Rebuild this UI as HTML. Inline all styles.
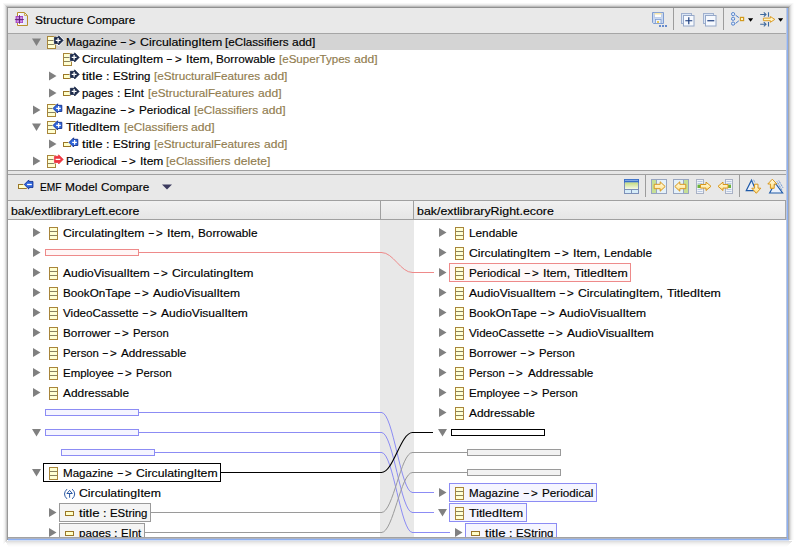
<!DOCTYPE html>
<html><head><meta charset="utf-8"><title>EMF Model Compare</title>
<style>
html,body{margin:0;padding:0;background:#fff;}
body{width:796px;height:548px;position:relative;overflow:hidden;font-family:"Liberation Sans",sans-serif;font-size:11px;color:#000;}
#g{position:absolute;left:0;top:0;}
.t{position:absolute;white-space:pre;line-height:14px;height:14px;transform-origin:0 50%;-webkit-text-stroke:.15px currentColor;}
#win{position:absolute;left:8px;top:8px;width:778px;height:529px;background:#fff;overflow:hidden;}
#in{position:absolute;left:-8px;top:-8px;width:796px;height:548px;}
.e{position:absolute;}
</style></head><body>
<div class="e" style="left:7px;top:7px;width:1px;height:533px;background:#989898"></div>
<div class="e" style="left:6px;top:7px;width:1px;height:534px;background:#c8c8c8"></div>
<div class="e" style="left:5px;top:6px;width:1px;height:536px;background:#e2e2e2"></div>
<div class="e" style="left:4px;top:5px;width:1px;height:538px;background:#f3f3f3"></div>
<div class="e" style="left:3px;top:4px;width:1px;height:540px;background:#fafafa"></div>
<div class="e" style="left:7px;top:7px;width:782px;height:1px;background:#909090"></div>
<div class="e" style="left:6px;top:6px;width:784px;height:1px;background:#bcbcbc"></div>
<div class="e" style="left:5px;top:5px;width:786px;height:1px;background:#dadada"></div>
<div class="e" style="left:4px;top:4px;width:788px;height:1px;background:#ededed"></div>
<div class="e" style="left:3px;top:3px;width:790px;height:1px;background:#f7f7f7"></div>
<div class="e" style="left:786px;top:8px;width:1px;height:531px;background:#bcc8e2"></div>
<div class="e" style="left:787px;top:8px;width:1px;height:533px;background:#8cb0f2"></div>
<div class="e" style="left:788px;top:8px;width:1px;height:532px;background:#a6a8ae"></div>
<div class="e" style="left:789px;top:7px;width:1px;height:533px;background:#c6c6c6"></div>
<div class="e" style="left:790px;top:6px;width:1px;height:534px;background:#dedede"></div>
<div class="e" style="left:791px;top:5px;width:1px;height:535px;background:#eeeeee"></div>
<div class="e" style="left:792px;top:4px;width:1px;height:536px;background:#f7f7f7"></div>
<div class="e" style="left:793px;top:3px;width:1px;height:537px;background:#fcfcfc"></div>
<div class="e" style="left:8px;top:537px;width:779px;height:1px;background:#a2a2a2"></div>
<div class="e" style="left:8px;top:538px;width:779px;height:1px;background:#aeb3c2"></div>
<div class="e" style="left:8px;top:539px;width:781px;height:1px;background:#8cb0f2"></div>
<div class="e" style="left:8px;top:540px;width:781px;height:1px;background:#d3def3"></div>
<div class="e" style="left:6px;top:541px;width:786px;height:1px;background:#e0e0e0"></div>
<div class="e" style="left:6px;top:542px;width:785px;height:1px;background:#e9e9e9"></div>
<div class="e" style="left:7px;top:543px;width:783px;height:1px;background:#f0f0f0"></div>
<div class="e" style="left:7px;top:544px;width:782px;height:1px;background:#f6f6f6"></div>
<div class="e" style="left:8px;top:545px;width:780px;height:1px;background:#fafafa"></div>
<div class="e" style="left:8px;top:546px;width:779px;height:1px;background:#fdfdfd"></div>
<div id="win"><div id="in">
<svg id="g" width="796" height="548" viewBox="0 0 796 548">
<defs><linearGradient id="lg" x1="0" y1="0" x2="0" y2="1"><stop offset="0" stop-color="#f1f1f1"/><stop offset="1" stop-color="#e6e6e6"/></linearGradient></defs>
<g shape-rendering="crispEdges">
<rect x="8" y="8" width="778" height="25" fill="#e9e9e9"/>
<rect x="8" y="33" width="778" height="1" fill="#a6a6a6"/>
<rect x="8" y="34" width="778" height="16" fill="#d4d4d4"/>
<rect x="8" y="170" width="778" height="1" fill="#a0a0a0"/>
<rect x="8" y="171" width="778" height="3" fill="#e6e6e6"/>
<rect x="8" y="174" width="778" height="1" fill="#a0a0a0"/>
<rect x="8" y="175" width="778" height="25" fill="#e8e8e8"/>
<rect x="8" y="200" width="778" height="1" fill="#a0a0a0"/>
<rect x="8" y="201" width="778" height="18" fill="url(#lg)"/>
<rect x="8" y="219" width="778" height="1" fill="#a0a0a0"/>
<rect x="380" y="220" width="34" height="317" fill="#e8e8e8"/>
<rect x="380" y="201" width="1" height="18" fill="#a0a0a0"/>
<rect x="413" y="201" width="1" height="18" fill="#a0a0a0"/><rect x="785" y="201" width="1" height="18" fill="#a0a0a0"/>
</g>
<path d="M32 38.5h9l-4.5 7.5z" fill="#808080"/>
<g transform="translate(47,36)"><rect x=".5" y=".5" width="8" height="12" fill="#ffffd2" stroke="#a8853a"/><path d="M1 4.5H8M1 8.5H8" stroke="#8a8260" fill="none"/></g>
<path d="M54.4 37.3H58.6V35.8L63.2 40.4L58.6 45.0V43.5H54.4z" fill="#fff" stroke="#fff" stroke-width="1.8" stroke-linejoin="round"/><path d="M54.4 37.3H58.6V35.8L63.2 40.4L58.6 45.0V43.5H54.4z" fill="#1c2a4a" stroke="#1c2a4a" stroke-width=".8"/><path d="M55.7 40.4H60.5M58.1 38.0V42.8" stroke="#fff" stroke-width="1.25" fill="none"/>
<g transform="translate(63,53)"><rect x=".5" y=".5" width="8" height="12" fill="#ffffd2" stroke="#a8853a"/><path d="M1 4.5H8M1 8.5H8" stroke="#8a8260" fill="none"/></g>
<path d="M70.4 54.3H74.6V52.8L79.2 57.4L74.6 62.0V60.5H70.4z" fill="#fff" stroke="#fff" stroke-width="1.8" stroke-linejoin="round"/><path d="M70.4 54.3H74.6V52.8L79.2 57.4L74.6 62.0V60.5H70.4z" fill="#1c2a4a" stroke="#1c2a4a" stroke-width=".8"/><path d="M71.7 57.4H76.5M74.1 55.0V59.8" stroke="#fff" stroke-width="1.25" fill="none"/>
<path d="M49 71.5l7.5 4.5l-7.5 4.5z" fill="#808080"/>
<rect x="63.5" y="74.5" width="7" height="4" fill="#ffffc8" stroke="#9a7628"/>
<path d="M70.4 71.30000000000001H74.6V69.80000000000001L79.2 74.4L74.6 79.0V77.5H70.4z" fill="#fff" stroke="#fff" stroke-width="1.8" stroke-linejoin="round"/><path d="M70.4 71.30000000000001H74.6V69.80000000000001L79.2 74.4L74.6 79.0V77.5H70.4z" fill="#1c2a4a" stroke="#1c2a4a" stroke-width=".8"/><path d="M71.7 74.4H76.5M74.1 72.0V76.80000000000001" stroke="#fff" stroke-width="1.25" fill="none"/>
<path d="M49 88.5l7.5 4.5l-7.5 4.5z" fill="#808080"/>
<rect x="63.5" y="91.5" width="7" height="4" fill="#ffffc8" stroke="#9a7628"/>
<path d="M70.4 88.30000000000001H74.6V86.80000000000001L79.2 91.4L74.6 96.0V94.5H70.4z" fill="#fff" stroke="#fff" stroke-width="1.8" stroke-linejoin="round"/><path d="M70.4 88.30000000000001H74.6V86.80000000000001L79.2 91.4L74.6 96.0V94.5H70.4z" fill="#1c2a4a" stroke="#1c2a4a" stroke-width=".8"/><path d="M71.7 91.4H76.5M74.1 89.0V93.80000000000001" stroke="#fff" stroke-width="1.25" fill="none"/>
<path d="M33 105.5l7.5 4.5l-7.5 4.5z" fill="#808080"/>
<g transform="translate(47,104)"><rect x=".5" y=".5" width="8" height="12" fill="#ffffd2" stroke="#a8853a"/><path d="M1 4.5H8M1 8.5H8" stroke="#8a8260" fill="none"/></g>
<path d="M61.8 105.30000000000001H57.6V103.80000000000001L53 108.4L57.6 113.0V111.5H61.8z" fill="#fff" stroke="#fff" stroke-width="1.8" stroke-linejoin="round"/><path d="M61.8 105.30000000000001H57.6V103.80000000000001L53 108.4L57.6 113.0V111.5H61.8z" fill="#2f66dd" stroke="#12308a" stroke-width=".9"/><path d="M56.2 108.4H60.8M58.6 106.0V110.80000000000001" stroke="#fff" stroke-width="1.25" fill="none"/>
<path d="M32 123.5h9l-4.5 7.5z" fill="#808080"/>
<g transform="translate(47,121)"><rect x=".5" y=".5" width="8" height="12" fill="#ffffd2" stroke="#a8853a"/><path d="M1 4.5H8M1 8.5H8" stroke="#8a8260" fill="none"/></g>
<path d="M61.8 122.30000000000001H57.6V120.80000000000001L53 125.4L57.6 130.0V128.5H61.8z" fill="#fff" stroke="#fff" stroke-width="1.8" stroke-linejoin="round"/><path d="M61.8 122.30000000000001H57.6V120.80000000000001L53 125.4L57.6 130.0V128.5H61.8z" fill="#2f66dd" stroke="#12308a" stroke-width=".9"/><path d="M56.2 125.4H60.8M58.6 123.0V127.80000000000001" stroke="#fff" stroke-width="1.25" fill="none"/>
<path d="M49 139.5l7.5 4.5l-7.5 4.5z" fill="#808080"/>
<rect x="63.5" y="142.5" width="7" height="4" fill="#ffffc8" stroke="#9a7628"/>
<path d="M77.8 139.3H73.6V137.8L69 142.4L73.6 147.0V145.5H77.8z" fill="#fff" stroke="#fff" stroke-width="1.8" stroke-linejoin="round"/><path d="M77.8 139.3H73.6V137.8L69 142.4L73.6 147.0V145.5H77.8z" fill="#2f66dd" stroke="#12308a" stroke-width=".9"/><path d="M72.2 142.4H76.8M74.6 140.0V144.8" stroke="#fff" stroke-width="1.25" fill="none"/>
<path d="M33 156.5l7.5 4.5l-7.5 4.5z" fill="#808080"/>
<g transform="translate(47,155)"><rect x=".5" y=".5" width="8" height="12" fill="#ffffd2" stroke="#a8853a"/><path d="M1 4.5H8M1 8.5H8" stroke="#8a8260" fill="none"/></g>
<path d="M54.4 156.3H58.6V154.8L63.2 159.4L58.6 164.0V162.5H54.4z" fill="#fff" stroke="#fff" stroke-width="1.8" stroke-linejoin="round"/><path d="M54.4 156.3H58.6V154.8L63.2 159.4L58.6 164.0V162.5H54.4z" fill="#ee3540" stroke="#ee3540" stroke-width=".8"/><path d="M55.6 159.4H60.3" stroke="#fff" stroke-width="1.3" fill="none"/>
<rect x="18.5" y="184.5" width="8" height="4" fill="#ffffc8" stroke="#9a7628"/>
<path d="M33.0 181.4H28.799999999999997V179.9L24.2 184.5L28.799999999999997 189.1V187.6H33.0z" fill="#fff" stroke="#fff" stroke-width="1.8" stroke-linejoin="round"/><path d="M33.0 181.4H28.799999999999997V179.9L24.2 184.5L28.799999999999997 189.1V187.6H33.0z" fill="#2f66dd" stroke="#12308a" stroke-width=".9"/><path d="M27.099999999999998 184.5H31.799999999999997" stroke="#fff" stroke-width="1.3" fill="none"/>
<path d="M162 184.5h10l-5 5z" fill="#3b3a5e"/>
<path d="M33 228.0l7.5 4.5l-7.5 4.5z" fill="#808080"/>
<g transform="translate(49,227.0)"><rect x=".5" y=".5" width="8" height="12" fill="#ffffd2" stroke="#a8853a"/><path d="M1 4.5H8M1 8.5H8" stroke="#8a8260" fill="none"/></g>
<path d="M33 268.0l7.5 4.5l-7.5 4.5z" fill="#808080"/>
<g transform="translate(49,267.0)"><rect x=".5" y=".5" width="8" height="12" fill="#ffffd2" stroke="#a8853a"/><path d="M1 4.5H8M1 8.5H8" stroke="#8a8260" fill="none"/></g>
<path d="M33 288.0l7.5 4.5l-7.5 4.5z" fill="#808080"/>
<g transform="translate(49,287.0)"><rect x=".5" y=".5" width="8" height="12" fill="#ffffd2" stroke="#a8853a"/><path d="M1 4.5H8M1 8.5H8" stroke="#8a8260" fill="none"/></g>
<path d="M33 308.0l7.5 4.5l-7.5 4.5z" fill="#808080"/>
<g transform="translate(49,307.0)"><rect x=".5" y=".5" width="8" height="12" fill="#ffffd2" stroke="#a8853a"/><path d="M1 4.5H8M1 8.5H8" stroke="#8a8260" fill="none"/></g>
<path d="M33 328.0l7.5 4.5l-7.5 4.5z" fill="#808080"/>
<g transform="translate(49,327.0)"><rect x=".5" y=".5" width="8" height="12" fill="#ffffd2" stroke="#a8853a"/><path d="M1 4.5H8M1 8.5H8" stroke="#8a8260" fill="none"/></g>
<path d="M33 348.0l7.5 4.5l-7.5 4.5z" fill="#808080"/>
<g transform="translate(49,347.0)"><rect x=".5" y=".5" width="8" height="12" fill="#ffffd2" stroke="#a8853a"/><path d="M1 4.5H8M1 8.5H8" stroke="#8a8260" fill="none"/></g>
<path d="M33 368.0l7.5 4.5l-7.5 4.5z" fill="#808080"/>
<g transform="translate(49,367.0)"><rect x=".5" y=".5" width="8" height="12" fill="#ffffd2" stroke="#a8853a"/><path d="M1 4.5H8M1 8.5H8" stroke="#8a8260" fill="none"/></g>
<path d="M33 388.0l7.5 4.5l-7.5 4.5z" fill="#808080"/>
<g transform="translate(49,387.0)"><rect x=".5" y=".5" width="8" height="12" fill="#ffffd2" stroke="#a8853a"/><path d="M1 4.5H8M1 8.5H8" stroke="#8a8260" fill="none"/></g>
<path d="M33 248.0l7.5 4.5l-7.5 4.5z" fill="#808080"/>
<g shape-rendering="crispEdges">
<rect x="45.5" y="249.5" width="93" height="6" fill="#fff6f6" stroke="#ee8a8a" stroke-width="1"/>
<path d="M139 252.5H382" stroke="#ee8a8a" stroke-width="1" fill="none"/>
<rect x="45.5" y="409.5" width="93" height="6" fill="#f5f5ff" stroke="#8c8cf4" stroke-width="1"/>
<path d="M139 412.5H382" stroke="#8c8cf4" stroke-width="1" fill="none"/>
<rect x="45.5" y="429.5" width="93" height="6" fill="#f5f5ff" stroke="#8c8cf4" stroke-width="1"/>
<path d="M139 432.5H382" stroke="#8c8cf4" stroke-width="1" fill="none"/>
<rect x="61.5" y="449.5" width="93" height="6" fill="#f5f5ff" stroke="#8c8cf4" stroke-width="1"/>
<path d="M155 452.5H382" stroke="#8c8cf4" stroke-width="1" fill="none"/>
<rect x="43.5" y="463.5" width="177" height="18" fill="#fff" stroke="#000" stroke-width="1"/>
<path d="M221 472.5H382" stroke="#000" stroke-width="1" fill="none"/>
<rect x="59.5" y="503.5" width="91" height="18" fill="#f4f4f4" stroke="#9a9a9a" stroke-width="1"/>
<path d="M151 512.5H382" stroke="#9a9a9a" stroke-width="1" fill="none"/>
<rect x="59.5" y="523.5" width="85" height="18" fill="#f4f4f4" stroke="#9a9a9a" stroke-width="1"/>
<path d="M145 532.5H382" stroke="#9a9a9a" stroke-width="1" fill="none"/>
</g>
<path d="M32 429.0h9l-4.5 7.5z" fill="#808080"/>
<path d="M32 469.0h9l-4.5 7.5z" fill="#808080"/>
<g transform="translate(49,467.0)"><rect x=".5" y=".5" width="8" height="12" fill="#ffffd2" stroke="#a8853a"/><path d="M1 4.5H8M1 8.5H8" stroke="#8a8260" fill="none"/></g>
<path d="M49 508.0l7.5 4.5l-7.5 4.5z" fill="#808080"/>
<rect x="65.5" y="511.5" width="8" height="4" fill="#ffffc8" stroke="#9a7628"/>
<path d="M49 528.0l7.5 4.5l-7.5 4.5z" fill="#808080"/>
<rect x="65.5" y="531.5" width="8" height="4" fill="#ffffc8" stroke="#9a7628"/>
<g transform="translate(63.5,488.5)" fill="none" stroke="#1f4f9e" stroke-width=".95"><path d="M3.5 .6Q-1.5 5.5 3.5 10.4M8.7 .6Q13.7 5.5 8.7 10.4"/><path d="M6.1 1.9L3.4 5H8.8zM6.1 5V9.2"/></g>
<path d="M381.5 252.5C393.28 252.5 400.72 272.5 412.5 272.5" stroke="#ee8a8a" stroke-width="1" fill="none"/>
<path d="M381.5 412.5C393.28 412.5 400.72 492.5 412.5 492.5" stroke="#8c8cf4" stroke-width="1" fill="none"/>
<path d="M381.5 432.5C393.28 432.5 400.72 512.5 412.5 512.5" stroke="#8c8cf4" stroke-width="1" fill="none"/>
<path d="M381.5 452.5C393.28 452.5 400.72 532.5 412.5 532.5" stroke="#8c8cf4" stroke-width="1" fill="none"/>
<path d="M381.5 512.5C393.28 512.5 400.72 452.5 412.5 452.5" stroke="#9a9a9a" stroke-width="1" fill="none"/>
<path d="M381.5 532.5C393.28 532.5 400.72 472.5 412.5 472.5" stroke="#9a9a9a" stroke-width="1" fill="none"/>
<path d="M381.5 472.5C393.28 472.5 400.72 432.5 412.5 432.5" stroke="#000" stroke-width="1.15" fill="none"/>
<path d="M439 228.0l7.5 4.5l-7.5 4.5z" fill="#808080"/>
<path d="M439 248.0l7.5 4.5l-7.5 4.5z" fill="#808080"/>
<path d="M439 268.0l7.5 4.5l-7.5 4.5z" fill="#808080"/>
<path d="M439 288.0l7.5 4.5l-7.5 4.5z" fill="#808080"/>
<path d="M439 308.0l7.5 4.5l-7.5 4.5z" fill="#808080"/>
<path d="M439 328.0l7.5 4.5l-7.5 4.5z" fill="#808080"/>
<path d="M439 348.0l7.5 4.5l-7.5 4.5z" fill="#808080"/>
<path d="M439 368.0l7.5 4.5l-7.5 4.5z" fill="#808080"/>
<path d="M439 388.0l7.5 4.5l-7.5 4.5z" fill="#808080"/>
<path d="M439 408.0l7.5 4.5l-7.5 4.5z" fill="#808080"/>
<g shape-rendering="crispEdges">
<rect x="449.5" y="263.5" width="181" height="18" fill="#fff8f8" stroke="#ee8a8a" stroke-width="1"/>
<path d="M412 272.5H434" stroke="#ee8a8a" stroke-width="1" fill="none"/>
<rect x="451.5" y="429.5" width="93" height="6" fill="#fff" stroke="#000" stroke-width="1"/>
<path d="M412 432.5H433" stroke="#000" stroke-width="1" fill="none"/>
<rect x="467.5" y="449.5" width="93" height="6" fill="#f2f2f2" stroke="#9a9a9a" stroke-width="1"/>
<path d="M412 452.5H467" stroke="#9a9a9a" stroke-width="1" fill="none"/>
<rect x="467.5" y="469.5" width="93" height="6" fill="#f2f2f2" stroke="#9a9a9a" stroke-width="1"/>
<path d="M412 472.5H467" stroke="#9a9a9a" stroke-width="1" fill="none"/>
<rect x="449.5" y="483.5" width="147" height="18" fill="#f5f5ff" stroke="#8c8cf4" stroke-width="1"/>
<path d="M412 492.5H434" stroke="#8c8cf4" stroke-width="1" fill="none"/>
<rect x="449.5" y="503.5" width="77" height="18" fill="#f5f5ff" stroke="#8c8cf4" stroke-width="1"/>
<path d="M412 512.5H434" stroke="#8c8cf4" stroke-width="1" fill="none"/>
<rect x="465.5" y="523.5" width="91" height="18" fill="#f5f5ff" stroke="#8c8cf4" stroke-width="1"/>
<path d="M412 532.5H450" stroke="#8c8cf4" stroke-width="1" fill="none"/>
</g>
<g transform="translate(455,227.0)"><rect x=".5" y=".5" width="8" height="12" fill="#ffffd2" stroke="#a8853a"/><path d="M1 4.5H8M1 8.5H8" stroke="#8a8260" fill="none"/></g>
<g transform="translate(455,247.0)"><rect x=".5" y=".5" width="8" height="12" fill="#ffffd2" stroke="#a8853a"/><path d="M1 4.5H8M1 8.5H8" stroke="#8a8260" fill="none"/></g>
<g transform="translate(455,267.0)"><rect x=".5" y=".5" width="8" height="12" fill="#ffffd2" stroke="#a8853a"/><path d="M1 4.5H8M1 8.5H8" stroke="#8a8260" fill="none"/></g>
<g transform="translate(455,287.0)"><rect x=".5" y=".5" width="8" height="12" fill="#ffffd2" stroke="#a8853a"/><path d="M1 4.5H8M1 8.5H8" stroke="#8a8260" fill="none"/></g>
<g transform="translate(455,307.0)"><rect x=".5" y=".5" width="8" height="12" fill="#ffffd2" stroke="#a8853a"/><path d="M1 4.5H8M1 8.5H8" stroke="#8a8260" fill="none"/></g>
<g transform="translate(455,327.0)"><rect x=".5" y=".5" width="8" height="12" fill="#ffffd2" stroke="#a8853a"/><path d="M1 4.5H8M1 8.5H8" stroke="#8a8260" fill="none"/></g>
<g transform="translate(455,347.0)"><rect x=".5" y=".5" width="8" height="12" fill="#ffffd2" stroke="#a8853a"/><path d="M1 4.5H8M1 8.5H8" stroke="#8a8260" fill="none"/></g>
<g transform="translate(455,367.0)"><rect x=".5" y=".5" width="8" height="12" fill="#ffffd2" stroke="#a8853a"/><path d="M1 4.5H8M1 8.5H8" stroke="#8a8260" fill="none"/></g>
<g transform="translate(455,387.0)"><rect x=".5" y=".5" width="8" height="12" fill="#ffffd2" stroke="#a8853a"/><path d="M1 4.5H8M1 8.5H8" stroke="#8a8260" fill="none"/></g>
<g transform="translate(455,407.0)"><rect x=".5" y=".5" width="8" height="12" fill="#ffffd2" stroke="#a8853a"/><path d="M1 4.5H8M1 8.5H8" stroke="#8a8260" fill="none"/></g>
<path d="M438 429.0h9l-4.5 7.5z" fill="#808080"/>
<path d="M439 488.0l7.5 4.5l-7.5 4.5z" fill="#808080"/>
<g transform="translate(455,487.0)"><rect x=".5" y=".5" width="8" height="12" fill="#ffffd2" stroke="#a8853a"/><path d="M1 4.5H8M1 8.5H8" stroke="#8a8260" fill="none"/></g>
<path d="M438 509.0h9l-4.5 7.5z" fill="#808080"/>
<g transform="translate(455,507.0)"><rect x=".5" y=".5" width="8" height="12" fill="#ffffd2" stroke="#a8853a"/><path d="M1 4.5H8M1 8.5H8" stroke="#8a8260" fill="none"/></g>
<path d="M455 528.0l7.5 4.5l-7.5 4.5z" fill="#808080"/>
<rect x="471.5" y="531.5" width="8" height="4" fill="#ffffc8" stroke="#9a7628"/>
<defs><linearGradient id="dg" x1="0" y1="0" x2="1" y2="0"><stop offset="0" stop-color="#ffffff"/><stop offset="1" stop-color="#dfe0f4"/></linearGradient></defs><path d="M17.5 12.5H24.5L27.5 15.5V25.5H17.5z" fill="url(#dg)" stroke="#b8902c"/><path d="M24.5 12.8V15.5H27.2" fill="none" stroke="#c9a548" stroke-width=".9"/><rect x="15.6" y="16" width="7.4" height="7" fill="#a446c2"/><g fill="#cf9ce4"><rect x="16.8" y="17.1" width="2" height="1.8"/><rect x="20.2" y="17.1" width="2" height="1.8"/><rect x="16.8" y="20.4" width="2" height="1.8"/><rect x="20.2" y="20.4" width="2" height="1.8"/></g><path d="M14.9 19.5H23.9M19.5 15V23.8" stroke="#5a2070" stroke-width=".8"/>
<g transform="translate(652,12)"><path d="M.5 .5H11.5V11.5H1.5L.5 10.5z" fill="#c9d8f0" stroke="#7f9dd0"/><rect x="2.5" y="1" width="7" height="4.5" fill="#fdfdfd" stroke="#a9bde0" stroke-width=".6"/><rect x="2.5" y="1" width="7" height="1.5" fill="#f8e6a8"/><rect x="3.5" y="7.5" width="5.5" height="4" fill="#eef3fb" stroke="#7f9dd0" stroke-width=".8"/><rect x="5" y="9" width="2" height="2" fill="#e8c860"/><path d="M7 14h2m1 0h2m1 0h2" stroke="#3b6cc4" stroke-width="1.6"/></g>
<g shape-rendering="crispEdges"><rect x="673" y="8" width="1" height="22" fill="#9c9c9c"/><rect x="723" y="8" width="1" height="22" fill="#9c9c9c"/></g>
<g transform="translate(681,13)"><rect x=".5" y=".5" width="10" height="10" fill="#dbe6f5" stroke="#9fb0cf"/><rect x="2.5" y="2.5" width="10.5" height="10.5" fill="#f6f9fe" stroke="#96a8c8"/><path d="M4.3 7.75H11.3M7.8 4.2V11.3" stroke="#173a7c" stroke-width="1.15" fill="none"/></g>
<g transform="translate(703,13)"><rect x=".5" y=".5" width="10" height="10" fill="#dbe6f5" stroke="#9fb0cf"/><rect x="2.5" y="2.5" width="10.5" height="10.5" fill="#f6f9fe" stroke="#96a8c8"/><path d="M4.3 7.75H11.3" stroke="#173a7c" stroke-width="1.15" fill="none"/></g>
<g transform="translate(731,12)" fill="#e4eefc" stroke="#4a7bc8"><rect x=".6" y=".6" width="3" height="3" rx="1.2"/><rect x=".6" y="5.3" width="3" height="3" rx="1.2"/><rect x=".6" y="10.1" width="3" height="3" rx="1.2"/><path d="M4.6 3.2L7.8 5.6M4.6 11.4L7.8 8.8" fill="none"/><rect x="9.4" y="5.4" width="3.2" height="3.2" fill="#fff4c0" stroke="#d29a1e" stroke-width="1.2"/></g>
<path d="M748 18.2h5.2l-2.6 3.6zM778 18.2h5.2l-2.6 3.6z" fill="#000"/>
<g transform="translate(760,12)"><g stroke="#3f6a9f" fill="none" stroke-width="1.1"><path d="M.2 2.5H6M3.8 .4L6 2.5L3.8 4.6M8.5 .2V4.8"/><path d="M.2 12.3H6M3.8 10.2L6 12.3L3.8 14.4M8.5 10V14.6"/></g><path d="M3.4 6.1H10.4V4.5L14.8 7.4L10.4 10.3V8.7H3.4z" fill="#fff2c0" stroke="#d8961c" stroke-width=".9"/></g>
<g shape-rendering="crispEdges"><rect x="645" y="175" width="1" height="22" fill="#9c9c9c"/><rect x="739" y="175" width="1" height="22" fill="#9c9c9c"/></g>
<g transform="translate(624,179)"><rect x=".5" y=".5" width="14" height="14" fill="#eef6fb" stroke="#7d90b8"/><rect x=".5" y=".5" width="14" height="2.6" fill="#3a6fc6" stroke="#3a6fc6"/><path d="M1 1.4H14" stroke="#9fc0ee" stroke-width=".8"/><rect x="1" y="3.5" width="13" height="6.5" fill="url(#gg)"/><path d="M.5 10.5H14.5M7.5 10.5V14.5" stroke="#7d90b8"/><rect x="1" y="11" width="6" height="3" fill="#d6ecf8"/><rect x="8" y="11" width="6" height="3" fill="#d6ecf8"/></g>
<defs><linearGradient id="og" x1="0" y1="0" x2="0" y2="1"><stop offset="0" stop-color="#fffbe6"/><stop offset=".55" stop-color="#ffeeb4"/><stop offset="1" stop-color="#ffd978"/></linearGradient></defs>
<defs><linearGradient id="gg" x1="0" y1="0" x2="0" y2="1"><stop offset="0" stop-color="#c4dc80"/><stop offset="1" stop-color="#f6f9e6"/></linearGradient></defs>
<g transform="translate(651,179)"><rect x=".5" y=".5" width="15" height="14" fill="#e4f1fa" stroke="#97a5c0"/><rect x="1" y="1" width="4" height="13" fill="#c6df94"/><path d="M5.5 .5V14.5" stroke="#97a5c0"/><path d="M3.2 5.3H9.2V2.8L14.2 7.5L9.2 12.2V9.7H3.2z" fill="url(#og)" stroke="#d8961c"/></g>
<g transform="translate(673,179)"><rect x=".5" y=".5" width="15" height="14" fill="#e4f1fa" stroke="#97a5c0"/><rect x="11" y="1" width="4" height="13" fill="#c6df94"/><path d="M10.5 .5V14.5" stroke="#97a5c0"/><path d="M12.8 5.3H6.8V2.8L1.8 7.5L6.8 12.2V9.7H12.8z" fill="url(#og)" stroke="#d8961c"/></g>
<rect x="696.5" y="179.5" width="7" height="14" fill="#f0f3f8" stroke="#a9b1c4"/><path d="M697.5 181.5H702.5M697.5 183.5H702.5M697.5 189.5H702.5M697.5 191.5H702.5" stroke="#a9bcdc" stroke-width=".8"/>
<rect x="697.5" y="184.6" width="3.4" height="3.4" fill="#6ab23a"/>
<path d="M700.5 184.5H706V182.10000000000002L711 186.3L706 190.5V188.10000000000002H700.5z" fill="url(#og)" stroke="#d8961c"/>
<rect x="725.5" y="179.5" width="7" height="14" fill="#f0f3f8" stroke="#a9b1c4"/><path d="M726.5 181.5H731.5M726.5 183.5H731.5M726.5 189.5H731.5M726.5 191.5H731.5" stroke="#a9bcdc" stroke-width=".8"/>
<rect x="727.6" y="184.6" width="3.4" height="3.4" fill="#6ab23a"/>
<path d="M728 184.5H723V182.10000000000002L718 186.3L723 190.5V188.10000000000002H728z" fill="url(#og)" stroke="#d8961c"/>
<path d="M746.3 190.6L751.5 180.2L756 190.6z" fill="#eaf1fb" stroke="#1f5aa8" stroke-width="1.2"/><path d="M751.5 180.5l1.6 3.2M753.6 179.8l1.4 2.8" stroke="#3a76c8" stroke-width=".8" stroke-dasharray="1 .8"/><path d="M754.6 184.2H758V188.2H760.8L756.3 193.3L751.8 188.2H754.6z" fill="url(#og)" stroke="#d8961c"/>
<path d="M769.6 193L775.2 183L782.6 193z" fill="#eaf1fb" stroke="#1f5aa8" stroke-width="1.2"/><path d="M777 181.5l5.2 9M778.8 180.6l4.4 7.6" stroke="#3a76c8" stroke-width=".9" stroke-dasharray="1 .8"/><path d="M770.4 188.3V184H767.8L772.3 179.2L776.8 184H774.2V188.3z" fill="url(#og)" stroke="#d8961c"/>
</svg>
<span class="t" style="left:34.7px;top:13px;transform:scaleX(1.085)">Structure</span>
<span class="t" style="left:86.6px;top:13px;transform:scaleX(1.067)">Compare</span>
<span class="t" style="left:66.0px;top:35px;transform:scaleX(1.063)">Magazine</span>
<span class="t" style="left:120.4px;top:34.4px;transform:scaleX(1.818)">-</span>
<span class="t" style="left:128.7px;top:35px;transform:scaleX(1.057)">&gt;</span>
<span class="t" style="left:139.8px;top:35px;transform:scaleX(1.121)">CirculatingItem</span>
<span class="t" style="left:224.5px;top:35px;transform:scaleX(1.062)">[eClassifiers</span>
<span class="t" style="left:291.5px;top:35px;transform:scaleX(1.090)">add]</span>
<span class="t" style="left:81.6px;top:52px;transform:scaleX(1.106)">CirculatingItem</span>
<span class="t" style="left:166.4px;top:51.4px;transform:scaleX(1.792)">-</span>
<span class="t" style="left:174.6px;top:52px;transform:scaleX(1.057)">&gt;</span>
<span class="t" style="left:185.6px;top:52px;transform:scaleX(1.109)">Item,</span>
<span class="t" style="left:216.2px;top:52px;transform:scaleX(1.066)">Borrowable</span>
<span class="t" style="left:279.3px;top:52px;transform:scaleX(1.051);color:#917c4e">[eSuperTypes</span>
<span class="t" style="left:354.1px;top:52px;transform:scaleX(1.100);color:#917c4e">add]</span>
<span class="t" style="left:81.7px;top:69px;transform:scaleX(1.199)">title</span>
<span class="t" style="left:105.7px;top:69px;transform:scaleX(1.136)">:</span>
<span class="t" style="left:112.7px;top:69px;transform:scaleX(1.035)">EString</span>
<span class="t" style="left:154.4px;top:69px;transform:scaleX(1.064);color:#917c4e">[eStructuralFeatures</span>
<span class="t" style="left:263.9px;top:69px;transform:scaleX(1.095);color:#917c4e">add]</span>
<span class="t" style="left:82.1px;top:86px;transform:scaleX(1.041)">pages</span>
<span class="t" style="left:116.8px;top:86px;transform:scaleX(1.123)">:</span>
<span class="t" style="left:123.6px;top:86px;transform:scaleX(1.015)">EInt</span>
<span class="t" style="left:147.8px;top:86px;transform:scaleX(1.066);color:#917c4e">[eStructuralFeatures</span>
<span class="t" style="left:257.5px;top:86px;transform:scaleX(1.097);color:#917c4e">add]</span>
<span class="t" style="left:65.9px;top:103px;transform:scaleX(1.049)">Magazine</span>
<span class="t" style="left:119.6px;top:102.4px;transform:scaleX(1.791)">-</span>
<span class="t" style="left:127.7px;top:103px;transform:scaleX(1.057)">&gt;</span>
<span class="t" style="left:138.7px;top:103px;transform:scaleX(1.061)">Periodical</span>
<span class="t" style="left:194.0px;top:103px;transform:scaleX(1.071);color:#917c4e">[eClassifiers</span>
<span class="t" style="left:261.6px;top:103px;transform:scaleX(1.100);color:#917c4e">add]</span>
<span class="t" style="left:65.9px;top:120px;transform:scaleX(1.125)">TitledItem</span>
<span class="t" style="left:123.6px;top:120px;transform:scaleX(1.072);color:#917c4e">[eClassifiers</span>
<span class="t" style="left:191.3px;top:120px;transform:scaleX(1.101);color:#917c4e">add]</span>
<span class="t" style="left:81.7px;top:137px;transform:scaleX(1.199)">title</span>
<span class="t" style="left:105.7px;top:137px;transform:scaleX(1.136)">:</span>
<span class="t" style="left:112.7px;top:137px;transform:scaleX(1.035)">EString</span>
<span class="t" style="left:154.4px;top:137px;transform:scaleX(1.064);color:#917c4e">[eStructuralFeatures</span>
<span class="t" style="left:263.9px;top:137px;transform:scaleX(1.095);color:#917c4e">add]</span>
<span class="t" style="left:66.4px;top:154px;transform:scaleX(1.049)">Periodical</span>
<span class="t" style="left:120.7px;top:153.4px;transform:scaleX(1.769)">-</span>
<span class="t" style="left:128.7px;top:154px;transform:scaleX(1.057)">&gt;</span>
<span class="t" style="left:139.6px;top:154px;transform:scaleX(1.092)">Item</span>
<span class="t" style="left:166.4px;top:154px;transform:scaleX(1.077);color:#917c4e">[eClassifiers</span>
<span class="t" style="left:234.4px;top:154px;transform:scaleX(1.101);color:#917c4e">delete]</span>
<span class="t" style="left:39.7px;top:180px;transform:scaleX(0.922)">EMF</span>
<span class="t" style="left:64.6px;top:180px;transform:scaleX(1.083)">Model</span>
<span class="t" style="left:100.5px;top:180px;transform:scaleX(1.067)">Compare</span>
<span class="t" style="left:11.2px;top:204px;transform:scaleX(1.123)">bak/extlibraryLeft.ecore</span>
<span class="t" style="left:416.9px;top:204px;transform:scaleX(1.125)">bak/extlibraryRight.ecore</span>
<span class="t" style="left:62.6px;top:226px;transform:scaleX(1.110)">CirculatingItem</span>
<span class="t" style="left:147.7px;top:225.4px;transform:scaleX(1.799)">-</span>
<span class="t" style="left:155.9px;top:226px;transform:scaleX(1.057)">&gt;</span>
<span class="t" style="left:166.9px;top:226px;transform:scaleX(1.113)">Item,</span>
<span class="t" style="left:197.6px;top:226px;transform:scaleX(1.070)">Borrowable</span>
<span class="t" style="left:62.6px;top:266px;transform:scaleX(1.095)">AudioVisualItem</span>
<span class="t" style="left:153.1px;top:265.4px;transform:scaleX(1.799)">-</span>
<span class="t" style="left:161.3px;top:266px;transform:scaleX(1.057)">&gt;</span>
<span class="t" style="left:172.3px;top:266px;transform:scaleX(1.111)">CirculatingItem</span>
<span class="t" style="left:62.6px;top:286px;transform:scaleX(1.064)">BookOnTape</span>
<span class="t" style="left:134.0px;top:285.4px;transform:scaleX(1.803)">-</span>
<span class="t" style="left:142.1px;top:286px;transform:scaleX(1.057)">&gt;</span>
<span class="t" style="left:153.2px;top:286px;transform:scaleX(1.097)">AudioVisualItem</span>
<span class="t" style="left:62.6px;top:306px;transform:scaleX(1.058)">VideoCassette</span>
<span class="t" style="left:141.8px;top:305.4px;transform:scaleX(1.800)">-</span>
<span class="t" style="left:150.0px;top:306px;transform:scaleX(1.057)">&gt;</span>
<span class="t" style="left:161.0px;top:306px;transform:scaleX(1.096)">AudioVisualItem</span>
<span class="t" style="left:62.6px;top:326px;transform:scaleX(1.071)">Borrower</span>
<span class="t" style="left:114.0px;top:325.4px;transform:scaleX(1.793)">-</span>
<span class="t" style="left:122.2px;top:326px;transform:scaleX(1.057)">&gt;</span>
<span class="t" style="left:133.2px;top:326px;transform:scaleX(1.027)">Person</span>
<span class="t" style="left:62.6px;top:346px;transform:scaleX(1.030)">Person</span>
<span class="t" style="left:102.2px;top:345.4px;transform:scaleX(1.798)">-</span>
<span class="t" style="left:110.3px;top:346px;transform:scaleX(1.057)">&gt;</span>
<span class="t" style="left:121.4px;top:346px;transform:scaleX(1.068)">Addressable</span>
<span class="t" style="left:62.6px;top:366px;transform:scaleX(1.041)">Employee</span>
<span class="t" style="left:117.2px;top:365.4px;transform:scaleX(1.788)">-</span>
<span class="t" style="left:125.3px;top:366px;transform:scaleX(1.057)">&gt;</span>
<span class="t" style="left:136.3px;top:366px;transform:scaleX(1.025)">Person</span>
<span class="t" style="left:62.6px;top:386px;transform:scaleX(1.081)">Addressable</span>
<span class="t" style="left:62.6px;top:466px;transform:scaleX(1.054)">Magazine</span>
<span class="t" style="left:116.6px;top:465.4px;transform:scaleX(1.802)">-</span>
<span class="t" style="left:124.8px;top:466px;transform:scaleX(1.057)">&gt;</span>
<span class="t" style="left:135.8px;top:466px;transform:scaleX(1.112)">CirculatingItem</span>
<span class="t" style="left:78.8px;top:486px;transform:scaleX(1.116)">CirculatingItem</span>
<span class="t" style="left:78.8px;top:506px;transform:scaleX(1.200)">title</span>
<span class="t" style="left:102.8px;top:506px;transform:scaleX(1.137)">:</span>
<span class="t" style="left:109.8px;top:506px;transform:scaleX(1.037)">EString</span>
<span class="t" style="left:78.8px;top:526px;transform:scaleX(1.061)">pages</span>
<span class="t" style="left:114.1px;top:526px;transform:scaleX(1.145)">:</span>
<span class="t" style="left:121.1px;top:526px;transform:scaleX(1.035)">EInt</span>
<span class="t" style="left:468.7px;top:226px;transform:scaleX(1.071)">Lendable</span>
<span class="t" style="left:468.7px;top:246px;transform:scaleX(1.109)">CirculatingItem</span>
<span class="t" style="left:553.8px;top:245.39999999999998px;transform:scaleX(1.797)">-</span>
<span class="t" style="left:561.9px;top:246px;transform:scaleX(1.057)">&gt;</span>
<span class="t" style="left:572.9px;top:246px;transform:scaleX(1.112)">Item,</span>
<span class="t" style="left:603.6px;top:246px;transform:scaleX(1.057)">Lendable</span>
<span class="t" style="left:468.7px;top:266px;transform:scaleX(1.063)">Periodical</span>
<span class="t" style="left:523.7px;top:265.4px;transform:scaleX(1.794)">-</span>
<span class="t" style="left:531.8px;top:266px;transform:scaleX(1.057)">&gt;</span>
<span class="t" style="left:542.9px;top:266px;transform:scaleX(1.110)">Item,</span>
<span class="t" style="left:573.5px;top:266px;transform:scaleX(1.123)">TitledItem</span>
<span class="t" style="left:468.7px;top:286px;transform:scaleX(1.095)">AudioVisualItem</span>
<span class="t" style="left:559.2px;top:285.4px;transform:scaleX(1.798)">-</span>
<span class="t" style="left:567.3px;top:286px;transform:scaleX(1.057)">&gt;</span>
<span class="t" style="left:578.4px;top:286px;transform:scaleX(1.111)">CirculatingItem,</span>
<span class="t" style="left:666.8px;top:286px;transform:scaleX(1.126)">TitledItem</span>
<span class="t" style="left:468.7px;top:306px;transform:scaleX(1.064)">BookOnTape</span>
<span class="t" style="left:540.1px;top:305.4px;transform:scaleX(1.803)">-</span>
<span class="t" style="left:548.2px;top:306px;transform:scaleX(1.057)">&gt;</span>
<span class="t" style="left:559.3px;top:306px;transform:scaleX(1.097)">AudioVisualItem</span>
<span class="t" style="left:468.7px;top:326px;transform:scaleX(1.058)">VideoCassette</span>
<span class="t" style="left:547.9px;top:325.4px;transform:scaleX(1.800)">-</span>
<span class="t" style="left:556.1px;top:326px;transform:scaleX(1.057)">&gt;</span>
<span class="t" style="left:567.1px;top:326px;transform:scaleX(1.096)">AudioVisualItem</span>
<span class="t" style="left:468.7px;top:346px;transform:scaleX(1.071)">Borrower</span>
<span class="t" style="left:520.1px;top:345.4px;transform:scaleX(1.793)">-</span>
<span class="t" style="left:528.3px;top:346px;transform:scaleX(1.057)">&gt;</span>
<span class="t" style="left:539.3px;top:346px;transform:scaleX(1.027)">Person</span>
<span class="t" style="left:468.7px;top:366px;transform:scaleX(1.030)">Person</span>
<span class="t" style="left:508.3px;top:365.4px;transform:scaleX(1.798)">-</span>
<span class="t" style="left:516.4px;top:366px;transform:scaleX(1.057)">&gt;</span>
<span class="t" style="left:527.5px;top:366px;transform:scaleX(1.068)">Addressable</span>
<span class="t" style="left:468.7px;top:386px;transform:scaleX(1.041)">Employee</span>
<span class="t" style="left:523.3px;top:385.4px;transform:scaleX(1.788)">-</span>
<span class="t" style="left:531.4px;top:386px;transform:scaleX(1.057)">&gt;</span>
<span class="t" style="left:542.4px;top:386px;transform:scaleX(1.025)">Person</span>
<span class="t" style="left:468.7px;top:406px;transform:scaleX(1.078)">Addressable</span>
<span class="t" style="left:468.7px;top:486px;transform:scaleX(1.052)">Magazine</span>
<span class="t" style="left:522.6px;top:485.4px;transform:scaleX(1.798)">-</span>
<span class="t" style="left:530.7px;top:486px;transform:scaleX(1.057)">&gt;</span>
<span class="t" style="left:541.8px;top:486px;transform:scaleX(1.065)">Periodical</span>
<span class="t" style="left:468.7px;top:506px;transform:scaleX(1.130)">TitledItem</span>
<span class="t" style="left:485.1px;top:526px;transform:scaleX(1.199)">title</span>
<span class="t" style="left:509.1px;top:526px;transform:scaleX(1.136)">:</span>
<span class="t" style="left:516.1px;top:526px;transform:scaleX(1.035)">EString</span>
</div></div>
</body></html>
